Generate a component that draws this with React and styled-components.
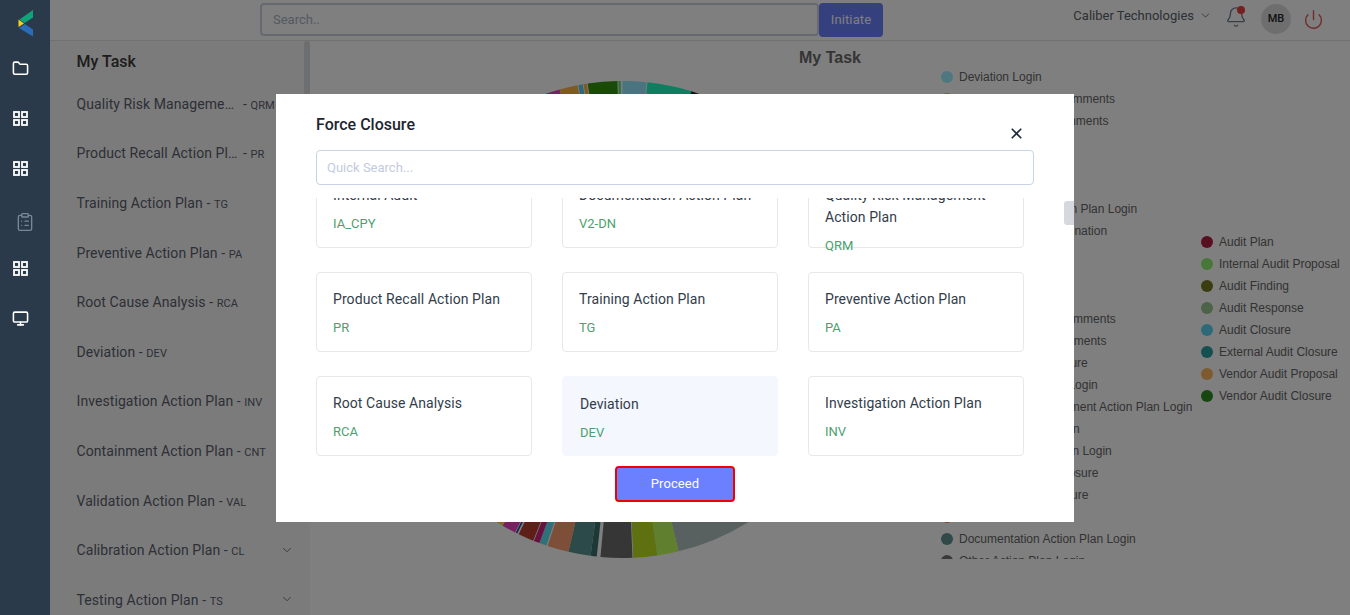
import React from "react";
import styled, { createGlobalStyle } from "styled-components";
import { Bell, ChevronDown, ClipboardList, Folder, Monitor, Power, X } from "lucide-react";

const GlobalStyle = createGlobalStyle`
  html, body {
    margin: 0;
    padding: 0;
    height: 100%;
    overflow: hidden;
    background: #fff;
    font-family: Roboto, "Liberation Sans", sans-serif;
  }
  * { box-sizing: border-box; }
`;

const tasks = [
  { name: "Quality Risk Management Action Plan", code: "QRM", cut: true },
  { name: "Product Recall Action Plan", code: "PR", cut: true },
  { name: "Training Action Plan", code: "TG" },
  { name: "Preventive Action Plan", code: "PA" },
  { name: "Root Cause Analysis", code: "RCA" },
  { name: "Deviation", code: "DEV" },
  { name: "Investigation Action Plan", code: "INV" },
  { name: "Containment Action Plan", code: "CNT" },
  { name: "Validation Action Plan", code: "VAL" },
  { name: "Calibration Action Plan", code: "CL", more: true },
  { name: "Testing Action Plan", code: "TS", more: true },
];

const cards = [
  { name: "Internal Audit", code: "IA_CPY" },
  { name: "Documentation Action Plan", code: "V2-DN" },
  { name: "Quality Risk Management Action Plan", code: "QRM" },
  { name: "Product Recall Action Plan", code: "PR" },
  { name: "Training Action Plan", code: "TG" },
  { name: "Preventive Action Plan", code: "PA" },
  { name: "Root Cause Analysis", code: "RCA" },
  { name: "Deviation", code: "DEV", selected: true },
  { name: "Investigation Action Plan", code: "INV" },
];

const legendLeft = [
  ["Deviation Login", "#9eeeff"],
  ["Investigation Plan Comments", "#b0d070"],
  ["Deviation Senior Comments", "#70b0d0"],
  ["Change Control", "#d090b0"],
  ["Market Complaint", "#90c0a0"],
  ["Audit Trail", "#c0a070"],
  ["Implementation Action Plan Login", "#80a0c0"],
  ["Deviation QA Determination", "#c08080"],
  ["CAPA Login", "#a0a0d0"],
  ["Incident Login", "#70c0c0"],
  ["Deviation Verification", "#a0b0c0"],
  ["Containment Plan Comments", "#b0b070"],
  ["Verification Plan Comments", "#70b090"],
  ["Preventive Plan Closure", "#c090d0"],
  ["Root Cause Review Login", "#90b0e0"],
  ["Quality Risk Management Action Plan Login", "#d0a090"],
  ["Calibration Action Plan", "#a0c090"],
  ["Preventive Action Plan Login", "#8090a0"],
  ["Investigation Plan Closure", "#b08060"],
  ["Calibration Plan Closure", "#60a0a0"],
  ["Other Closure", "#ff8a3c"],
  ["Documentation Action Plan Login", "#5e9490"],
  ["Other Action Plan Login", "#747474"],
];

const legendRight = [
  ["Audit Plan", "#b02040"],
  ["Internal Audit Proposal", "#90f070"],
  ["Audit Finding", "#747a20"],
  ["Audit Response", "#9ac68e"],
  ["Audit Closure", "#58d4f4"],
  ["External Audit Closure", "#28a09e"],
  ["Vendor Audit Proposal", "#ffb45c"],
  ["Vendor Audit Closure", "#2e8e20"],
];

// start and end angle, clockwise from the top of the pie
const slices = [
  [-19.5, -15.3, "#f040c0"],
  [-15.3, -10.9, "#ffb444"],
  [-10.7, -9.6, "#60d0f0"],
  [-9.4, -8.6, "#ffb444"],
  [-8.4, -1.2, "#349410"],
  [-1, -0.4, "#60e080"],
  [0, 5.8, "#94e8ff"],
  [6, 16.8, "#1affc0"],
  [16.8, 60, "#202020"],
  [60, 100, "#a0c0e0"],
  [100, 130, "#d0a0c0"],
  [130, 166.4, "#b0c2c0"],
  [166.4, 171.6, "#c0ff5e"],
  [171.6, 177.4, "#bee020"],
  [177.6, 185.3, "#6c6c6c"],
  [186.2, 187.7, "#3c7070"],
  [187.7, 193.1, "#589494"],
  [193.1, 198.3, "#fc9e70"],
  [198.6, 200.4, "#60e0f0"],
  [200.4, 201.8, "#d02080"],
  [202, 205.8, "#bc3e30"],
  [206.2, 206.6, "#3040a0"],
  [206.8, 210.2, "#f040c0"],
  [210.2, 212, "#ffe040"],
  [212, 270, "#90b0a0"],
  [270, 340.5, "#c0a0e0"],
];

const PIE_R = 238.5;

const slicePath = (from, to) => {
  const point = (deg) => {
    const rad = (deg * Math.PI) / 180;
    return `${PIE_R + PIE_R * Math.sin(rad)} ${PIE_R - PIE_R * Math.cos(rad)}`;
  };
  const large = to - from > 180 ? 1 : 0;
  return `M${PIE_R} ${PIE_R} L${point(from)} A${PIE_R} ${PIE_R} 0 ${large} 1 ${point(to)} Z`;
};

const Logo = () => (
  <svg width="16" height="27" viewBox="0 0 16 27">
    <path d="M15 0 L15 7.5 L6.5 13 L1.5 9.5 Z" fill="#0fa37a" />
    <path d="M0.5 9.5 L6 13.5 L0.5 17 Z" fill="#f2d21b" />
    <path d="M1 18 L6.8 14 L15 19.5 L15 26.5 Z" fill="#2a6cb8" />
  </svg>
);

const GridIcon = () => (
  <svg width="15" height="15" viewBox="0 0 15 15" fill="none" stroke="currentColor" strokeWidth="1.8">
    <rect x="1" y="1" width="5" height="5" />
    <rect x="9" y="1" width="5" height="5" />
    <rect x="1" y="9" width="5" height="5" />
    <rect x="9" y="9" width="5" height="5" />
  </svg>
);

export default function App() {
  return (
    <Page>
      <GlobalStyle />
      <Sidebar>
        <LogoSlot>
          <Logo />
        </LogoSlot>
        <NavItem><Folder size={17} strokeWidth={2.2} /></NavItem>
        <NavItem $grid><GridIcon /></NavItem>
        <NavItem $grid><GridIcon /></NavItem>
        <NavItem $muted><ClipboardList size={20} strokeWidth={1.6} /></NavItem>
        <NavItem $grid><GridIcon /></NavItem>
        <NavItem><Monitor size={17} strokeWidth={2.2} /></NavItem>
      </Sidebar>

      <Main>
        <Header>
          <SearchBox placeholder="Search.." />
          <InitiateButton>Initiate</InitiateButton>
          <HeaderRight>
            <Company>
              Caliber Technologies
              <ChevronDown size={13} strokeWidth={1.6} />
            </Company>
            <BellWrap>
              <Bell size={22} strokeWidth={1.5} />
              <BellDot />
            </BellWrap>
            <Avatar>MB</Avatar>
            <PowerWrap>
              <Power size={21} strokeWidth={1.6} />
            </PowerWrap>
          </HeaderRight>
        </Header>

        <Content>
          <TaskPanel>
            <PanelTitle>My Task</PanelTitle>
            {tasks.map((t) => (
              <TaskRow key={t.code}>
                <TaskName $cut={t.cut}>{t.name}</TaskName>
                <TaskCode>&nbsp;- <small>{t.code}</small></TaskCode>
                {t.more && (
                  <TaskChevron>
                    <ChevronDown size={14} strokeWidth={1.6} />
                  </TaskChevron>
                )}
              </TaskRow>
            ))}
            <PanelThumb />
          </TaskPanel>

          <ChartPanel>
            <ChartTitle>My Task</ChartTitle>
            <ChartRow>
              <Pie width={PIE_R * 2} height={PIE_R * 2} viewBox={`0 0 ${PIE_R * 2} ${PIE_R * 2}`}>
                {slices.map(([from, to, color]) => (
                  <path key={from} d={slicePath(from, to)} fill={color} />
                ))}
              </Pie>
              <Legend $left>
                {legendLeft.map(([label, color]) => (
                  <LegendRow key={label}>
                    <Dot $color={color} />
                    {label}
                  </LegendRow>
                ))}
              </Legend>
              <Legend $top={165}>
                {legendRight.map(([label, color]) => (
                  <LegendRow key={label}>
                    <Dot $color={color} />
                    {label}
                  </LegendRow>
                ))}
              </Legend>
            </ChartRow>
          </ChartPanel>
        </Content>
      </Main>

      <Overlay>
        <Modal>
          <ModalHead>
            <ModalTitle>Force Closure</ModalTitle>
            <CloseButton>
              <X size={17} strokeWidth={2.4} />
            </CloseButton>
          </ModalHead>
          <QuickSearch placeholder="Quick Search..." />
          <CardScroller>
            <CardGrid>
              {cards.map((c) => (
                <Card key={c.code} $selected={c.selected}>
                  <CardName>{c.name}</CardName>
                  <CardCode>{c.code}</CardCode>
                </Card>
              ))}
            </CardGrid>
          </CardScroller>
          <ModalFoot>
            <ProceedButton>Proceed</ProceedButton>
          </ModalFoot>
          <ModalThumb />
        </Modal>
      </Overlay>
    </Page>
  );
}

const Page = styled.div`
  display: flex;
  width: 1350px;
  height: 615px;
  overflow: hidden;
`;

const Sidebar = styled.aside`
  position: relative;
  z-index: 20;
  flex: 0 0 50px;
  background: #2b3a4a;
`;

const LogoSlot = styled.div`
  height: 43px;
  padding: 10px 0 0 18px;
`;

const NavItem = styled.div`
  display: flex;
  align-items: center;
  height: 50px;
  padding-left: ${(p) => (p.$muted ? "15px" : p.$grid ? "13px" : "12px")};
  color: ${(p) => (p.$muted ? "#76889a" : "#fff")};
  transform: ${(p) => (p.$muted ? "translateY(4px)" : "none")};
`;

const Main = styled.div`
  flex: 1;
  min-width: 0;
  display: flex;
  flex-direction: column;
`;

const Header = styled.header`
  display: flex;
  align-items: center;
  flex: 0 0 41px;
  padding: 0 26px 1px 210px;
  background: #fff;
  border-bottom: 1px solid #e2e2e2;
`;

const SearchBox = styled.input`
  width: 559px;
  height: 33px;
  padding: 0 11px;
  border: 2px solid #ccd5e0;
  border-radius: 4px;
  background: #fff;
  font-family: Roboto, sans-serif;
  font-size: 13px;
  outline: none;
  &::placeholder { color: #a8b3c2; }
`;

const InitiateButton = styled.button`
  width: 64px;
  height: 34px;
  padding: 0;
  border: none;
  border-radius: 4px;
  background: #6a80ff;
  color: #fff;
  font-family: Roboto, sans-serif;
  font-size: 13px;
  font-weight: 400;
  letter-spacing: 0.1px;
`;

const HeaderRight = styled.div`
  display: flex;
  align-items: center;
  margin-left: auto;
`;

const Company = styled.div`
  display: flex;
  align-items: center;
  gap: 5px;
  margin-top: -9px;
  color: #5a6069;
  font-size: 13px;
`;

const BellWrap = styled.div`
  position: relative;
  display: flex;
  margin: -6px 0 0 13px;
  color: #6f7d8c;
`;

const BellDot = styled.span`
  position: absolute;
  top: 0;
  right: 2px;
  width: 8px;
  height: 8px;
  border-radius: 50%;
  background: #e84040;
`;

const Avatar = styled.div`
  display: flex;
  align-items: center;
  justify-content: center;
  width: 30px;
  height: 30px;
  margin: -2px 0 0 14px;
  border-radius: 50%;
  background: #dcdcdc;
  color: #222;
  font-size: 11px;
  font-weight: 500;
`;

const PowerWrap = styled.div`
  display: flex;
  margin: -1px 0 0 12px;
  color: #e05a5a;
`;

const Content = styled.div`
  flex: 1;
  display: flex;
  min-height: 0;
`;

const TaskPanel = styled.div`
  position: relative;
  flex: 0 0 260px;
  padding-left: 26.5px;
  overflow: hidden;
  background: #f7f7f7;
`;

const PanelTitle = styled.h2`
  height: 37.8px;
  margin: 0;
  color: #3a3a3a;
  font-size: 16px;
  font-weight: 500;
  line-height: 41px;
`;

const PanelThumb = styled.div`
  position: absolute;
  top: 0;
  right: 0;
  width: 6px;
  height: 300px;
  border-radius: 3px;
  background: #d8dce0;
`;

const TaskRow = styled.div`
  position: relative;
  display: flex;
  align-items: center;
  height: 49.65px;
  color: #5a606c;
  font-size: 14px;
  letter-spacing: 0.08px;
  white-space: nowrap;
`;

const TaskName = styled.span`
  ${(p) => p.$cut && "max-width: 163px; overflow: hidden; text-overflow: ellipsis;"}
`;

const TaskCode = styled.span`
  small {
    font-size: 11px;
  }
`;

const TaskChevron = styled.span`
  position: absolute;
  right: 16px;
  top: 17px;
  display: flex;
  color: #707070;
`;

const ChartPanel = styled.div`
  flex: 1;
  min-width: 0;
  background: #fff;
`;

const ChartTitle = styled.h2`
  height: 25px;
  margin: 0;
  padding-left: 489px;
  color: #6a6a6a;
  font-family: "Liberation Sans", sans-serif;
  font-size: 16px;
  font-weight: 700;
  line-height: 34px;
  white-space: nowrap;
`;

const ChartRow = styled.div`
  display: flex;
  align-items: flex-start;
`;

const Pie = styled.svg`
  flex: none;
  margin: 15px 0 0 73.5px;
`;

const Legend = styled.div`
  flex: none;
  width: ${(p) => (p.$left ? "260px" : "auto")};
  height: ${(p) => (p.$left ? "493px" : "auto")};
  margin-left: ${(p) => (p.$left ? "80.5px" : "0")};
  margin-top: ${(p) => p.$top || 0}px;
  overflow: hidden;
`;

const LegendRow = styled.div`
  display: flex;
  align-items: center;
  gap: 6px;
  height: 22px;
  color: #666;
  font-family: "Liberation Sans", sans-serif;
  font-size: 12px;
  white-space: nowrap;
`;

const Dot = styled.span`
  flex: none;
  width: 12px;
  height: 12px;
  border-radius: 50%;
  background: ${(p) => p.$color};
`;

const Overlay = styled.div`
  position: fixed;
  inset: 0;
  z-index: 10;
  display: flex;
  justify-content: center;
  align-items: flex-start;
  padding-top: 94px;
  background: rgba(0, 0, 0, 0.5);
`;

const Modal = styled.div`
  position: relative;
  width: 798px;
  height: 428px;
  padding: 20px 40px;
  background: #fff;
`;

const ModalHead = styled.div`
  display: flex;
  justify-content: space-between;
  align-items: flex-start;
  height: 36px;
`;

const ModalTitle = styled.h3`
  margin: 1px 0 0;
  color: #1d2530;
  font-size: 16px;
  font-weight: 500;
  line-height: 20px;
`;

const CloseButton = styled.span`
  display: flex;
  margin: 11px 9px 0 0;
  color: #1d2b3a;
`;

const QuickSearch = styled.input`
  display: block;
  width: 100%;
  height: 35px;
  padding: 0 10px;
  border: 1px solid #c9d3e6;
  border-radius: 4px;
  font-family: Roboto, sans-serif;
  font-size: 13px;
  outline: none;
  &::placeholder { color: #c3cbe0; }
`;

const CardScroller = styled.div`
  height: 258px;
  margin-top: 13px;
  overflow: hidden;
`;

const CardGrid = styled.div`
  display: grid;
  grid-template-columns: repeat(3, 216px);
  grid-auto-rows: 80px;
  column-gap: 30px;
  row-gap: 24px;
  margin-top: -30px;
`;

const Card = styled.div`
  height: 80px;
  padding: 15px 16px;
  border: ${(p) => (p.$selected ? "2px solid #f4f7fe" : "1px solid #e8e8ea")};
  border-radius: 4px;
  background: ${(p) => (p.$selected ? "#f4f7fe" : "#fff")};
`;

const CardName = styled.div`
  color: #333d4a;
  font-size: 14px;
  letter-spacing: 0.08px;
  line-height: 22px;
`;

const CardCode = styled.div`
  margin-top: 7px;
  color: #4d9f70;
  font-size: 13px;
  line-height: 22px;
`;

const ModalFoot = styled.div`
  display: flex;
  justify-content: center;
  margin-top: 10px;
`;

const ProceedButton = styled.button`
  width: 120px;
  height: 36px;
  padding: 0 0 2px;
  border: 2px solid #f00000;
  border-radius: 4px;
  background: #6a80ff;
  color: #fff;
  font-family: Roboto, sans-serif;
  font-size: 13px;
  font-weight: 400;
  letter-spacing: 0.1px;
`;

const ModalThumb = styled.div`
  position: absolute;
  top: 107px;
  right: 0;
  width: 10px;
  height: 24px;
  border-radius: 3px 0 0 3px;
  background: #d5d9dd;
`;
